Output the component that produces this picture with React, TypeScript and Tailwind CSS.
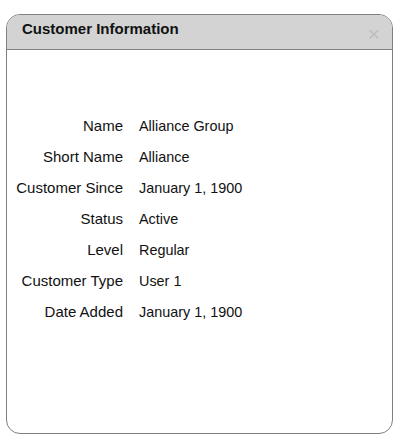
const ROWS = [
  { label: 'Name', value: 'Alliance Group' },
  { label: 'Short Name', value: 'Alliance' },
  { label: 'Customer Since', value: 'January 1, 1900' },
  { label: 'Status', value: 'Active' },
  { label: 'Level', value: 'Regular' },
  { label: 'Customer Type', value: 'User 1' },
  { label: 'Date Added', value: 'January 1, 1900' },
];

export default function App() {
  return (
    <div className="w-[402px] h-[443px] bg-white pt-[14px] pl-[6px] font-['Liberation_Sans',Arial,sans-serif] text-[#111]">
      <div className="w-[387px] h-[420px] rounded-[14px] border border-[#808080] overflow-hidden flex flex-col">
        {/* header */}
        <div className="h-[35px] shrink-0 bg-[#d3d3d3] border-b border-[#808080] flex items-start justify-between pl-[15px] pr-[12px]">
          <span className="text-[15px] font-bold leading-none mt-[6px]">Customer Information</span>
          <span className="text-[21px] leading-none text-[#bdbdbd] mt-[8px]">×</span>
        </div>
        {/* body */}
        <div className="flex-1 pt-[61px]">
          {ROWS.map((r) => (
            <div key={r.label} className="flex h-[31px] items-center text-[15px]">
              <span className="w-[116px] text-right">{r.label}</span>
              <span className="ml-[16px] text-[14.4px]">{r.value}</span>
            </div>
          ))}
        </div>
      </div>
    </div>
  );
}
